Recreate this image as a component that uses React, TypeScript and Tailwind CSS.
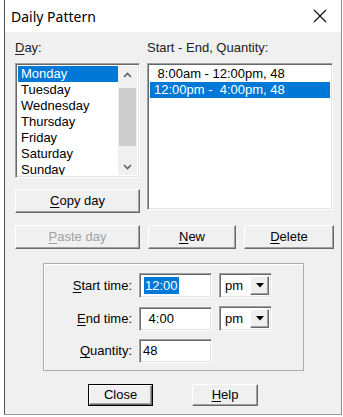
import type { ReactNode } from 'react';

const font = { fontFamily: '"Liberation Sans", Arial, sans-serif' };

const days = ['Monday', 'Tuesday', 'Wednesday', 'Thursday', 'Friday', 'Saturday', 'Sunday'];
const slots = [' 8:00am - 12:00pm, 48', '12:00pm -  4:00pm, 48'];

function Btn({
  children,
  className = '',
  disabled = false,
  isDefault = false,
}: {
  children: ReactNode;
  className?: string;
  disabled?: boolean;
  isDefault?: boolean;
}) {
  const face = (
    <div
      className={`flex h-full w-full items-center justify-center border border-t-white border-l-white border-b-[#696969] border-r-[#696969] bg-[#f0f0f0] shadow-[inset_-1px_-1px_0_#a0a0a0] text-[13px] ${
        disabled ? 'text-[#a0a0a0]' : 'text-black'
      }`}
    >
      {children}
    </div>
  );
  if (isDefault) {
    return <div className={`border border-black ${className}`}>{face}</div>;
  }
  return <div className={className}>{face}</div>;
}

function Sunken({ children, className = '' }: { children: ReactNode; className?: string }) {
  return (
    <div
      className={`border border-t-[#a0a0a0] border-l-[#a0a0a0] border-b-white border-r-white shadow-[inset_1px_1px_0_#696969,inset_-1px_-1px_0_#e3e3e3] bg-white ${className}`}
    >
      {children}
    </div>
  );
}

function Chevron({ up }: { up?: boolean }) {
  return (
    <svg width="9" height="6" viewBox="0 0 9 6">
      <path
        d={up ? 'M1 5 L4.5 1.5 L8 5' : 'M1 1 L4.5 4.5 L8 1'}
        fill="none"
        stroke="#606060"
        strokeWidth="1.6"
      />
    </svg>
  );
}

function Combo({ value }: { value: string }) {
  return (
    <Sunken className="flex h-[25px] w-[53px] items-center p-[2px]">
      <span className="flex-1 pl-[3px] text-[13px]">{value}</span>
      <div className="flex h-full w-[19px] items-center justify-center border border-t-white border-l-white border-b-[#696969] border-r-[#696969] bg-[#f0f0f0] shadow-[inset_-1px_-1px_0_#a0a0a0]">
        <svg width="8" height="5" viewBox="0 0 8 5">
          <path d="M0 0 H8 L4 4.5 Z" fill="#000" />
        </svg>
      </div>
    </Sunken>
  );
}

export default function App() {
  return (
    <div className="h-[417px] w-[343px] overflow-hidden bg-white" style={font}>
      <div className="ml-[4px] flex h-[415px] w-[338px] flex-col border-x border-b border-l-[#505050] border-r-[#8a8a8a] border-b-[#9a9a9a]">
        {/* Title bar */}
        <div className="flex h-[32px] items-center justify-between bg-white pl-[6px] pr-[14px]">
          <span className="text-[14px] text-black" style={{ fontFamily: '"Noto Sans", "Open Sans", sans-serif' }}>
            Daily Pattern
          </span>
          <svg width="14" height="14" viewBox="0 0 14 14">
            <path d="M1 1 L13 13 M13 1 L1 13" stroke="#111" strokeWidth="1.2" />
          </svg>
        </div>

        {/* Body */}
        <div className="flex flex-1 flex-col bg-[#f0f0f0] pl-[10px] pr-[7px] pt-[8px] text-[13px] text-black">
          <div className="flex gap-[7px]">
            {/* Day column */}
            <div className="flex w-[125px] flex-col">
              <div className="h-[16px] leading-[16px] text-[#222]">
                <span className="underline underline-offset-2">D</span>ay:
              </div>
              <Sunken className="mt-[7px] flex h-[115px] overflow-hidden p-[2px]">
                <div className="flex-1 overflow-hidden">
                  {days.map((d, i) => (
                    <div
                      key={d}
                      className={`h-[16px] pl-[3px] leading-[16px] ${i === 0 ? 'bg-[#0078d7] text-white' : ''}`}
                    >
                      {d}
                    </div>
                  ))}
                </div>
                <div className="flex w-[19px] flex-col items-center bg-[#f0f0f0]">
                  <div className="flex h-[17px] items-center justify-center">
                    <Chevron up />
                  </div>
                  <div className="mt-[5px] h-[58px] w-[17px] bg-[#cdcdcd]" />
                  <div className="flex-1" />
                  <div className="flex h-[17px] items-center justify-center">
                    <Chevron />
                  </div>
                </div>
              </Sunken>
              <Btn className="mt-[11px] h-[24px]">
                <span>
                  <span className="underline underline-offset-2">C</span>opy day
                </span>
              </Btn>
            </div>

            {/* Slots column */}
            <div className="flex w-[186px] flex-col">
              <div className="h-[16px] leading-[16px] text-[#222]">Start - End, Quantity:</div>
              <Sunken className="mt-[7px] h-[147px] overflow-hidden p-[2px]">
                {slots.map((s, i) => (
                  <div
                    key={s}
                    className={`h-[16px] whitespace-pre pl-[4px] leading-[16px] ${i === 1 ? 'bg-[#0078d7] text-white' : ''}`}
                  >
                    {s}
                  </div>
                ))}
              </Sunken>
            </div>
          </div>

          {/* Button row */}
          <div className="mt-[12px] flex gap-[8px]">
            <Btn className="h-[24px] w-[125px]" disabled>
              <span>
                <span className="underline underline-offset-2">P</span>aste day
              </span>
            </Btn>
            <Btn className="h-[24px] w-[88px]">
              <span>
                <span className="underline underline-offset-2">N</span>ew
              </span>
            </Btn>
            <Btn className="h-[24px] w-[90px]">
              <span>
                <span className="underline underline-offset-2">D</span>elete
              </span>
            </Btn>
          </div>

          {/* Group box */}
          <div className="ml-[28px] mt-[14px] flex h-[108px] w-[261px] flex-col gap-[8px] border border-[#acacac] pt-[9px] shadow-[inset_1px_1px_0_white]">
            <div className="flex items-center">
              <div className="w-[88px] text-right">
                <span className="underline underline-offset-2">S</span>tart time:
              </div>
              <Sunken className="ml-[7px] flex h-[25px] w-[73px] items-center pl-[4px]">
                <span className="bg-[#0078d7] px-[1px] leading-[17px] text-white">12:00</span>
              </Sunken>
              <div className="ml-[7px]">
                <Combo value="pm" />
              </div>
            </div>
            <div className="flex items-center">
              <div className="w-[88px] text-right">
                <span className="underline underline-offset-2">E</span>nd time:
              </div>
              <Sunken className="ml-[7px] flex h-[24px] w-[73px] items-center whitespace-pre pl-[5px]">
                {' 4:00'}
              </Sunken>
              <div className="ml-[7px]">
                <Combo value="pm" />
              </div>
            </div>
            <div className="flex items-center">
              <div className="w-[88px] text-right">
                <span className="underline underline-offset-2">Q</span>uantity:
              </div>
              <Sunken className="ml-[7px] flex h-[24px] w-[73px] items-center pl-[3px]">48</Sunken>
            </div>
          </div>

          {/* Bottom buttons */}
          <div className="mt-[13px] flex justify-center gap-[39px] pr-[3px]">
            <Btn className="h-[22px] w-[65px]" isDefault>
              Close
            </Btn>
            <Btn className="h-[22px] w-[66px]">
              <span>
                <span className="underline underline-offset-2">H</span>elp
              </span>
            </Btn>
          </div>
        </div>
      </div>
    </div>
  );
}
